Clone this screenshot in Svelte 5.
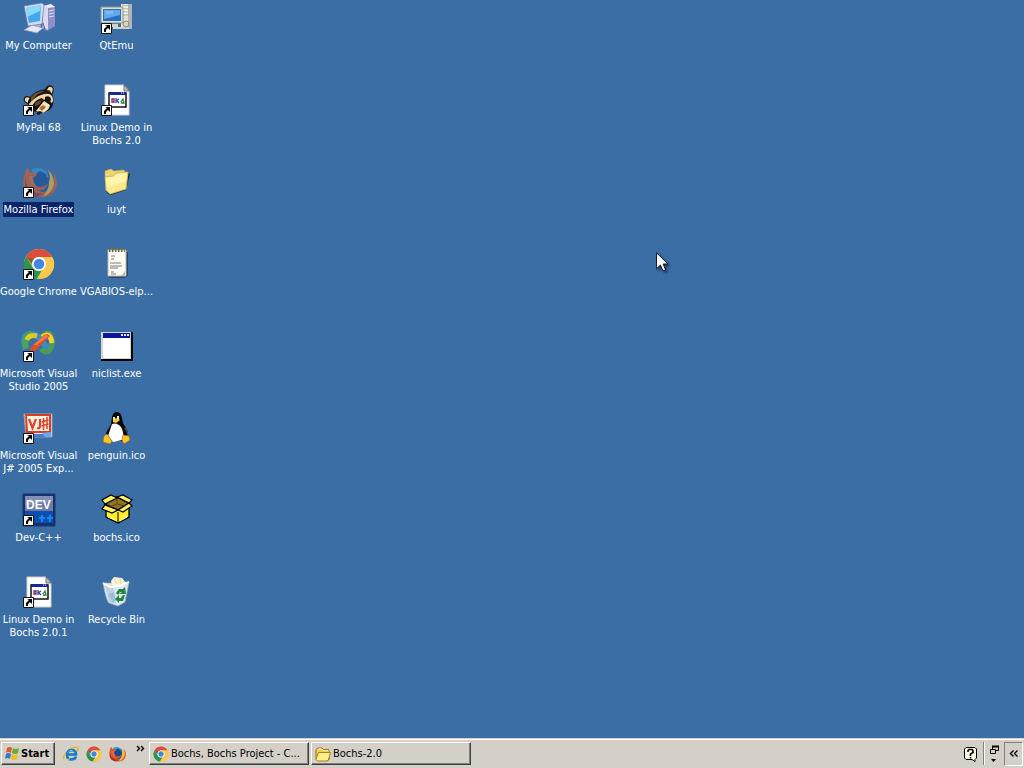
<script>
  const shortcuts = [
    { icon: 'computer', label: 'My Computer' },
    { icon: 'mypal', label: 'MyPal 68', link: true },
    { icon: 'firefox', label: 'Mozilla Firefox', link: true, selected: true },
    { icon: 'chrome', label: 'Google Chrome', link: true },
    { icon: 'studio', label: 'Microsoft Visual\nStudio 2005', link: true },
    { icon: 'vj', label: 'Microsoft Visual\nJ# 2005 Exp...', link: true },
    { icon: 'dev', label: 'Dev-C++', link: true },
    { icon: 'batch', label: 'Linux Demo in\nBochs 2.0.1', link: true },
    { icon: 'qtemu', label: 'QtEmu', link: true },
    { icon: 'batch', label: 'Linux Demo in\nBochs 2.0', link: true },
    { icon: 'folder', label: 'iuyt' },
    { icon: 'notes', label: 'VGABIOS-elp...' },
    { icon: 'window', label: 'niclist.exe' },
    { icon: 'penguin', label: 'penguin.ico' },
    { icon: 'box', label: 'bochs.ico' },
    { icon: 'recycle', label: 'Recycle Bin' }
  ];
  const quickLaunch = [
    { icon: 'ie', label: 'Internet Explorer' },
    { icon: 'chrome', label: 'Google Chrome' },
    { icon: 'firefox', label: 'Mozilla Firefox' }
  ];
  const tasks = [
    { icon: 'chrome', label: 'Bochs, Bochs Project - C...' },
    { icon: 'openfolder', label: 'Bochs-2.0' }
  ];
</script>

{#snippet art(name)}
  {#if name === 'computer'}
    <path d="M20 4l8-2 4 3v19l-8 5-5-3z" fill="#8f91c6" />
    <path d="M20 4l5 2v22l-5-3z" fill="#d9daf1" />
    <path d="M20 4l8-2 4 3-7 1z" fill="#eeeefa" />
    <path d="M26 9l5-1M26 12l5-1M26 15l5-1" stroke="#dddef5" />
    <path d="M11 21h6l1 4H9z" fill="#a9aed6" />
    <path d="M1 28l8-5 11 3-6 5z" fill="#e6e7f4" stroke="#8d90bb" stroke-width=".7" />
    <path d="M1 4l18-3 2 2-2 19-14 2z" fill="#d4dcf0" stroke="#717da8" stroke-width=".7" />
    <path d="M3 6l15-3-1 16-11 2z" fill="#42a9ef" />
    <path d="M3 6l15-3-1 6L4 15z" fill="#8bd8ff" />
    <path d="M20 21l2 6" stroke="#5a639a" />
  {:else if name === 'qtemu'}
    <path d="M20 2h10v25H20z" fill="#e0e0d5" />
    <path d="M27 2h4v25h-4z" fill="#b1b5b7" />
    <path d="M21 4h7M21 7h7M21 10h7M21 13h7" stroke="#a4a69e" />
    <path d="M21 5h6M21 8h6M21 11h6" stroke="#fffff2" />
    <path d="M0 5h22v16H0z" fill="#e1dfca" stroke="#8d9292" />
    <path d="M2 7h18v12H2z" fill="#246fc5" />
    <path d="M3 8h16v5L3 17z" fill="#63a9e7" />
    <path d="M5 9h7v3H5z" fill="#83bdf0" />
    <path d="M8 22h9v3H8zM12 25h16v2H12z" fill="#d2d2c8" />
    <circle cx="25" cy="22" r="3" fill="#dad6bc" stroke="#898b7e" />
  {:else if name === 'mypal'}
    <ellipse cx="26" cy="7" rx="4.5" ry="6" transform="rotate(22 26 7)" fill="#201811" />
    <ellipse cx="26.500" cy="7" rx="2.800" ry="4.500" transform="rotate(22 26 7)" fill="#f0d8ad" />
    <ellipse cx="26" cy="9" rx="1.500" ry="3" fill="#6e4931" />
    <ellipse cx="5" cy="16" rx="4.500" ry="3.800" transform="rotate(30 5 16)" fill="#1c1713" />
    <ellipse cx="5" cy="16" rx="3.200" ry="2.500" transform="rotate(30 5 16)" fill="#f0d8ad" />
    <path d="M5 17Q8 9 18 6q7-2 11 4 3 6 0 13-3 5-9 5-10 2-15-7z" fill="#171411" />
    <path d="M8 13q6-7 14-6l-7 3q-5 4-7 9z" fill="#6c5334" />
    <path d="M6 20q6-7 12-9 8-3 11 1 2 4 0 7l-5-3q-5-2-9 3l-8 5z" fill="#eed4a5" />
    <path d="M9 22q4-7 10-8l3 4-5 5-7 3zM22 13q5-2 6 2l-1 4-5-2z" fill="#18130f" />
    <path d="M12 19q4-3 7-3l-3 5-4 1z" fill="#624a30" />
    <path d="M21 17l6 4q-1 6-8 8l-6-2 4-5z" fill="#f7e5bd" />
    <path d="M16 24l4-3 3 2-4 4z" fill="#a56c42" /><path d="M16 27l4 1-4 3-3-1z" fill="#20150f" />
  {:else if name === 'firefox'}
    <circle cx="16" cy="15" r="12" fill="#1752a2" />
    <path d="M8 4q8-5 16 2l2 6-5-3-9 1z" fill="#329bd3" />
    <path d="M11 9l6-4 6 3 1 8-6 4-7-3z" fill="#164b91" />
    <path d="M2 7q1-5 3-5l2 4 5 1 2 2-4 3q0 5 3 8 5 3 12-2-3 8-11 6 9 5 15-3 4-5 1-16 4 6 4 13-2 13-15 13Q4 30 1 21-1 15 2 7z" fill="#dc5b24" />
    <path d="M25 4q6 5 6 14-2 10-11 12 6-6 6-14 2-5-1-12z" fill="#f6bd3a" />
    <path d="M2 11q0 12 11 16l7 1-7 3Q4 29 2 22z" fill="#a92c2c" />
    <path d="M6 10l4 0q-1 7 4 11-7-1-8-11z" fill="#ed6c2b" />
  {:else if name === 'chrome'}
    <circle cx="16" cy="16" r="15" fill="#fbc441" />
    <path d="M3 9Q7 1 16 1q9 0 13 8H16q-6 0-7 7z" fill="#dc4c3f" />
    <path d="M3 9l7 11q3 4 9 2l-5 9Q4 30 1 19q-1-5 2-10z" fill="#28964e" />
    <path d="M29 9H16q7 1 6 9l-8 13q12 1 16-9 3-7-1-13z" fill="#fac94b" />
    <path d="M3 9l7 10 1-8z" fill="#1b6e40" opacity=".4" />
    <circle cx="16" cy="16" r="7" fill="#fff" />
    <circle cx="16" cy="16" r="5.3" fill="#4386e8" />
  {:else if name === 'studio'}
    <path d="M3 19Q-3 4 9 4q6 0 12 10 4 7 8 1" fill="none" stroke="#3a8ebd" stroke-width="6" />
    <path d="M3 18Q0 5 9 4" fill="none" stroke="#4aa650" stroke-width="6" />
    <path d="M4 10q2-6 10-4" fill="none" stroke="#e1ca28" stroke-width="5" />
    <path d="M20 6q5-6 8 0 3 7-1 14-4 4-9-1" fill="none" stroke="#4c9d54" stroke-width="5" />
    <path d="M19 7q8-6 10 6" fill="none" stroke="#ffcf2b" stroke-width="5" />
    <path d="M7 18L21 5q4-2 6 1L12 21q-4 2-5-3z" fill="#de4d26" />
    <path d="M10 15L22 5l4 1-12 9z" fill="#f57a45" />
  {:else if name === 'vj'}
    <path d="M1 2h28v23H3z" fill="#e9e9ef" stroke="#999fb8" />
    <path d="M2 2h26v19H3z" fill="#dc3b25" />
    <path d="M4 4h22v15H5z" fill="#fff1df" />
    <path d="M6 7l3.500 9L13 7M17 7v7q0 3-3 2" fill="none" stroke="#dc442a" stroke-width="2.200" />
    <path d="M20.500 6v12M24 5v12M18.500 10l7-2M18.500 14l7-2" fill="none" stroke="#dc442a" stroke-width="1.500" />
    <path d="M4 22h24v3H5z" fill="#3e7fdc" />
    <path d="M19 21l9-1v5h-6z" fill="#6baaf0" />
  {:else if name === 'dev'}
    <path d="M0 0h32v32H0z" fill="#153266" />
    <path d="M2 2h28v15H2z" fill="#6c7baa" />
    <path d="M2 2h28v5L2 12z" fill="#8290b9" />
    <path d="M2 17h28v12H2z" fill="#0b4eb0" />
    <text x="3" y="15" font-family="Liberation Sans, sans-serif" font-size="12" font-weight="700" fill="#fff">DEV</text>
    <path d="M16 24h6M19 21v7M24 24h6M27 21v7" stroke="#1687ec" stroke-width="2" />
    <path d="M0 0h32v32H0z" fill="none" stroke="#18396e" />
  {:else if name === 'batch'}
    <path d="M4 1h19l5 6v24H4z" fill="#fff" stroke="#d1ceca" />
    <path d="M23 1v6h5z" fill="#c3c2bb" stroke="#6f757f" />
    <path d="M8 9h17v14H8z" fill="#fff" stroke="#111" stroke-width="1.5" />
    <path d="M8 8h17v3H8z" fill="#172894" />
    <path d="M20 9h1M22 9h1" stroke="#fff" />
    <path d="M11 15h2v3h-2z" fill="none" stroke="#7d225b" stroke-width="1.300" />
    <path d="M15 14v5M15 17l3-2M16 17l2 2" stroke="#2745bb" stroke-width="1.300" />
    <path d="M20 18l2-3 1 4h-3" fill="none" stroke="#27823d" stroke-width="1.300" />
  {:else if name === 'folder'}
    <path d="M6 27l4 2 15-5 4-16-2-1z" fill="#1b2b42" />
    <path d="M4 8V5l6-2 3 2 10-1 1 2 3 1-2 16-16 5-4-4z" fill="#f0d572" stroke="#cda94a" stroke-width=".6" />
    <path d="M4 11l8-1 3-3 12-1-2 17-16 5-4-4z" fill="#fbe98f" stroke="#c6a245" stroke-width=".6" />
    <path d="M5 12l8-1 3-3 10-1-1 8-19 6z" fill="#fff4aa" />
  {:else if name === 'openfolder'}
    <path d="M2 26V7l4-3h8l3 3h10l2 4v15l-4 3H5z" fill="#f4cf52" stroke="#9b7520" stroke-width="2" />
    <path d="M2 27l5-14h24l-4 15-3 2H5z" fill="#ffef87" stroke="#a77e23" stroke-width="2" />
    <path d="M5 8l3-2h5l3 3h10" fill="none" stroke="#fff6b1" stroke-width="2" />
  {:else if name === 'notes'}
    <path d="M9 4h18v24l-4 2H8z" fill="#263449" opacity=".7" />
    <path d="M7 2h18v26H7z" fill="#fdfdf5" stroke="#b5b8b0" />
    <path d="M8 2h16" stroke="#6f6a39" stroke-width="4" stroke-dasharray="1.5 1.5" />
    <path d="M10 8h4M10 11h3M9 15h11M9 18h12M9 20h8M10 24h3M10 26h5" stroke="#777c82" />
    <path d="M24 23v5h-4z" fill="#b9bbb3" />
  {:else if name === 'window'}
    <path d="M0 2h31v28H0z" fill="#d7d4ca" />
    <path d="M31 2v28H0" fill="none" stroke="#000" stroke-width="2" />
    <path d="M2 4h27v24H2z" fill="#fff" />
    <path d="M2 3h27v5H2z" fill="#0717a0" />
    <path d="M20 4h2v2h-2zM23 4h2v2h-2zM26 4h2v2h-2z" fill="#e8e8ef" />
  {:else if name === 'penguin'}
    <path d="M11 5q1-5 5-5t5 6l1 5 5 9-2 9H7l-2-8 5-9z" fill="#090909" />
    <path d="M11 12q5-2 9 3 4 7 1 13l-9 2-5-6z" fill="#fff" />
    <path d="M12 7l5-1 2 2-4 3-3-1z" fill="#ffcb25" />
    <path d="M12 5h2v2h-2zM16 4h2v3h-2z" fill="#fff" />
    <path d="M6 22l5 7-2 3-7-2 1-6zM22 23l6 1 1 4-6 4-2-4z" fill="#ffc425" stroke="#9c6716" stroke-width=".6" />
    <path d="M24 16l3 6" stroke="#666" />
  {:else if name === 'box'}
    <path d="M5 10l12 5 11-6v14l-11 6-12-6z" fill="#ffee28" stroke="#000" stroke-width="1.3" />
    <path d="M4 10l12-7 12 6-11 7z" fill="#8e741c" stroke="#000" stroke-width="1.3" />
    <path d="M16 4v6l-7 3M16 10l8 2" fill="none" stroke="#5c480d" />
    <path d="M4 10L1 6l9-5 6 3zM16 3l6-2 9 5-3 3zM4 11l-3 4 10 4 6-3zM17 16l5 2 9-6-3-3z" fill="#fff16b" stroke="#000" stroke-width="1.2" />
    <path d="M17 18v10" stroke="#000" />
    <path d="M7 20l2 1M7 23l7 3M20 24l5-3M19 27l7-4" stroke="#fff9a1" />
  {:else if name === 'recycle'}
    <path d="M2 7q3 17 6 20l9 3 7-4 4-20-15 1z" fill="#d8e7f2" stroke="#9bb2c8" stroke-width=".7" />
    <path d="M4 8l8 3 3 17-7-2z" fill="#b7d2e5" />
    <path d="M10 5l3-4 8 1 4 5-5 5-9-3z" fill="#f8f2dd" />
    <path d="M13 2l3 6M19 2l1 7M10 7l-1 7" stroke="#f6db9e" stroke-width="1.5" />
    <path d="M2 7l7 4 9-1 10-4" fill="none" stroke="#fff" stroke-width="2" />
    <path d="M7 18l6-2 2 8-3 3z" fill="#91b7d0" opacity=".7" />
    <path d="M15 17l3-4h4l2-2 1 7h-7l3-2h-2l-2 3zM24 19l-2 6h-4v2l-4-4 4-4v3h2l2-3z" fill="#21883b" />
  {:else if name === 'ie'}
    <path d="M2 27q-4-7 7-16Q20 1 29 3q3 2-1 8" fill="none" stroke="#e6b735" stroke-width="3" />
    <path d="M26 21q-2 6-9 6-9 0-9-9t9-10q9 0 9 9H10" fill="none" stroke="#1679c5" stroke-width="5" />
    <path d="M10 13q3-6 9-4" fill="none" stroke="#73c6ed" stroke-width="2" />
    <path d="M3 26q4 4 11-1" fill="none" stroke="#f0cf66" stroke-width="2" />
  {/if}
{/snippet}

{#snippet arrow()}
  <path d="M.5 21.500h10v10H.5z" fill="#fff" stroke="#111" />
  <path d="M4 23h5v5l-2-2-2 2v2H3v-3l3-3z" fill="#000" />
{/snippet}

<main class="screen">
  <section class="desktop" aria-label="Desktop">
    {#each shortcuts as item}
      <button class="shortcut" class:selected={item.selected}>
        <svg class="big" viewBox="0 0 32 32" aria-hidden="true">
          <g class="drawing">{@render art(item.icon)}</g>
          {#if item.link}{@render arrow()}{/if}
        </svg>
        <span class="caption">{item.label}</span>
      </button>
    {/each}
    <svg class="pointer" viewBox="0 0 12 20" aria-hidden="true">
      <path d="M.5.8v16l4-3.8 2.5 6 2.6-1-2.4-6H12z" fill="#fff" stroke="#101820" />
    </svg>
  </section>

  <footer class="taskbar">
    <button class="start">
      <svg class="small" viewBox="0 0 16 16" aria-hidden="true">
        <path d="M3 2q3-2 5 0L7 7Q4 5 2 7z" fill="#e3562c" />
        <path d="M9 2q3 2 6 0l-1 5q-3 2-6 0z" fill="#67ad35" />
        <path d="M2 8q2-2 5 0l-1 5q-3-2-5 0z" fill="#3976cf" />
        <path d="M8 8q3 2 6 0l-1 5q-3 2-6 0z" fill="#f0bd27" />
      </svg>
      Start
    </button>
    <nav class="quick" aria-label="Quick launch">
      {#each quickLaunch as item}
        <button class="launch" aria-label={item.label}>
          <svg class="small" viewBox="0 0 32 32" aria-hidden="true">{@render art(item.icon)}</svg>
        </button>
      {/each}
      <button class="more" aria-label="More">
        <svg width="8" height="5" viewBox="0 0 8 5" aria-hidden="true"><path d="M0 0l2.5 2.5L0 5M4 0l2.5 2.5L4 5" fill="none" stroke="#000" stroke-width="1.4" /></svg>
      </button>
    </nav>
    <div class="tasks">
      {#each tasks as task}
        <button class="task">
          <svg class="small" viewBox="0 0 32 32" aria-hidden="true">{@render art(task.icon)}</svg>
          <span>{task.label}</span>
        </button>
      {/each}
    </div>
    <div class="tray">
      <button class="help" aria-label="Help">
        <svg width="15" height="16" viewBox="0 0 15 16" aria-hidden="true">
          <path d="M3 1.500h9l1.500 1.500v9L12 13.500v2L9 13.500H3L1.500 12V3z" fill="#ffffe6" stroke="#000" />
          <path d="M5 6V4.500L6 3.500h3l1 1v2L7.500 8v2M7.500 11v1.500" fill="none" stroke="#000" stroke-width="1.600" />
        </svg>
      </button>
      <span class="divider"></span>
      <button class="language" aria-label="Language bar options">
        <svg width="9" height="18" viewBox="0 0 9 18" aria-hidden="true">
          <path d="M2.500 4V1.500h6v4H6" fill="none" stroke="#000" /><path d="M2 1.500h7" stroke="#000" stroke-width="2" />
          <path d="M.5 4.500h5v4h-5z" fill="#d4d0c8" stroke="#000" />
          <path d="M1 14h5l-2.500 3z" fill="#000" />
        </svg>
      </button>
      <button class="expand" aria-label="Show hidden icons">
        <svg width="8" height="7" viewBox="0 0 8 7" aria-hidden="true"><path d="M3.500 .5l-3 3 3 3M7.500 .5l-3 3 3 3" fill="none" stroke="#000" stroke-width="1.400" /></svg>
      </button>
    </div>
  </footer>
</main>

<style>
  :global(body) { margin: 0; }
  .screen {
    display: flex;
    flex-direction: column;
    min-height: 100vh;
    background: #3a6ea5;
    font-family: "DejaVu Sans Condensed", "DejaVu Sans", sans-serif;
    font-stretch: condensed;
    font-size: 11px;
    line-height: 13px;
    cursor: default;
  }
  button {
    margin: 0;
    padding: 0;
    border: 0;
    background: none;
    font: inherit;
    color: inherit;
  }
  svg { display: block; flex: none; overflow: visible; }
  .desktop {
    position: relative;
    flex: 1;
    display: grid;
    grid-auto-flow: column;
    grid-template-rows: repeat(8, 82px);
    grid-auto-columns: 78px;
    align-content: start;
    color: #fff;
  }
  .shortcut {
    display: flex;
    flex-direction: column;
    align-items: center;
    gap: 4px;
    padding-top: 2px;
  }
  .big { width: 32px; height: 32px; }
  .caption {
    margin-right: 1px;
    padding: 1px;
    white-space: pre;
  }
  .selected .caption { background: #0a246a; }
  .selected .drawing { opacity: 0.6; }
  .pointer {
    position: absolute;
    left: 656px;
    top: 252px;
    width: 12px;
    height: 20px;
    filter: drop-shadow(2px 2px 1px #1d3d60);
  }
  .taskbar {
    display: flex;
    align-items: center;
    box-sizing: border-box;
    height: 30px;
    padding: 0 1px;
    border-top: 1px solid #d4d0c8;
    box-shadow: inset 0 1px #fff;
    background: #d4d0c8;
    color: #000;
  }
  .start, .task {
    display: flex;
    align-items: center;
    box-sizing: border-box;
    height: 23px;
    gap: 2px;
    padding: 0 3px;
    border: 1px solid;
    border-color: #fff #404040 #404040 #fff;
    box-shadow: inset -1px -1px #808080;
    white-space: nowrap;
  }
  .start { width: 54px; gap: 1px; padding: 0 2px; font-weight: 700; }
  .small { width: 16px; height: 16px; }
  .quick { display: flex; align-items: center; gap: 7px; padding-left: 8px; }
  .more { align-self: flex-start; padding: 0 4px 0 5px; }
  .tasks { display: flex; flex: 1; gap: 2px; }
  .task { flex: 0 1 160px; min-width: 0; overflow: hidden; }
  .tray { display: flex; align-items: center; gap: 5px; }
  .divider {
    width: 1px;
    height: 23px;
    border-left: 1px solid #808080;
    background: #fff;
  }
  .expand {
    display: grid;
    place-items: center;
    box-sizing: border-box;
    width: 19px;
    height: 24px;
    border: 1px solid;
    border-color: #808080 #fff #fff #808080;
  }
</style>
